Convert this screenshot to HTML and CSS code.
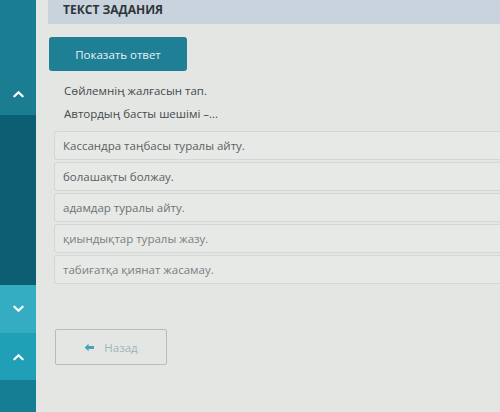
FILE: index.html
```html
<!DOCTYPE html>
<html lang="kk">
<head>
    <meta charset="UTF-8">
    <meta name="viewport" content="width=device-width, initial-scale=1.0">
    <title>Текст задания</title>
    <link rel="stylesheet" href="styles.css">
</head>
<body>
    <div class="layout">
        <div class="sidebar">
            <div class="side-block top">
                <svg class="chev" viewBox="0 0 12 8"><path d="M1.5 6.5 L6 2 L10.5 6.5"/></svg>
            </div>
            <div class="side-block dark"></div>
            <div class="side-block light">
                <svg class="chev" viewBox="0 0 12 8"><path d="M1.5 1.5 L6 6 L10.5 1.5"/></svg>
            </div>
            <div class="side-block mid">
                <svg class="chev" viewBox="0 0 12 8"><path d="M1.5 6.5 L6 2 L10.5 6.5"/></svg>
            </div>
            <div class="side-block bottom"></div>
        </div>

        <div class="main">
            <div class="task-header">ТЕКСТ ЗАДАНИЯ</div>
            <div class="content">
                <button class="btn-answer">Показать ответ</button>
                <div class="question">
                    <p>Сөйлемнің жалғасын тап.</p>
                    <p>Автордың басты шешімі –...</p>
                </div>
                <div class="options">
                    <div class="option">Кассандра таңбасы туралы айту.</div>
                    <div class="option">болашақты болжау.</div>
                    <div class="option">адамдар туралы айту.</div>
                    <div class="option">қиындықтар туралы жазу.</div>
                    <div class="option">табиғатқа қиянат жасамау.</div>
                </div>
                <button class="btn-back">
                    <svg class="arrow" viewBox="0 0 12 10"><path d="M0.5 5 L5 0.8 L5 3.3 L11 3.3 L11 6.7 L5 6.7 L5 9.2 Z"/></svg>
                    Назад
                </button>
            </div>
        </div>
    </div>
</body>
</html>
```

FILE: styles.css
```css
body {
    margin: 0;
    padding: 0;
    font-family: "Open Sans", Arial, sans-serif;
    background-color: #e2e5e1;
    overflow: hidden;
}

.layout {
    display: flex;
    height: 412px;
}

/* left navigation strip */
.sidebar {
    width: 36px;
    display: flex;
    flex-direction: column;
}

.side-block {
    display: flex;
    justify-content: center;
}

.side-block.top {
    height: 115px;
    background-color: #1b7d91;
    align-items: flex-end;
    padding-bottom: 17px;
    box-sizing: border-box;
}

.side-block.dark {
    height: 170px;
    background-color: #0c5f72;
}

.side-block.light {
    height: 48px;
    background-color: #34adc3;
    align-items: center;
}

.side-block.mid {
    height: 47px;
    background-color: #1fa0b7;
    align-items: center;
}

.side-block.bottom {
    flex: 1;
    background-color: #157e94;
}

.chev {
    width: 11px;
    height: 8px;
    fill: none;
    stroke: #ffffff;
    stroke-width: 2.4;
    stroke-linecap: round;
    stroke-linejoin: round;
}

.main {
    flex: 1;
    padding-left: 12px;
    background-color: #e3e6e2;
}

.task-header {
    height: 24px;
    background-color: #c8d3de;
    padding-left: 15px;
    font-size: 12px;
    font-weight: bold;
    color: #2f3438;
    line-height: 20px;
}

.content {
    padding-left: 1px;
}

.btn-answer {
    margin-top: 13px;
    width: 138px;
    height: 34px;
    background-color: #1f7f95;
    border: none;
    border-radius: 3px;
    color: #e8f2f4;
    font-family: "Open Sans", Arial, sans-serif;
    font-size: 11.5px;
    cursor: pointer;
}

.question {
    margin: 8px 0 6px 15px;
    font-size: 11.5px;
    color: #454a4e;
}

.question p {
    margin: 0;
    line-height: 23px;
}

.options {
    display: flex;
    flex-direction: column;
    gap: 2px;
    margin-left: 5px;
}

.option {
    height: 27px;
    line-height: 27px;
    padding-left: 8px;
    border: 1px solid #d3d8d6;
    border-right: none;
    border-radius: 3px 0 0 3px;
    background-color: #e6e9e5;
    font-size: 11.5px;
    color: #5a5f63;
}

.option:nth-child(n+3) {
    color: #6b7175;
}

.option:nth-child(n+4) {
    color: #7a8084;
}

.btn-back {
    margin: 45px 0 0 6px;
    width: 112px;
    height: 36px;
    display: flex;
    align-items: center;
    justify-content: center;
    gap: 9px;
    background: transparent;
    border: 1px solid #b4bcbd;
    border-radius: 2px;
    color: #9fb4b9;
    font-family: "Open Sans", Arial, sans-serif;
    font-size: 11.5px;
    cursor: pointer;
}

.arrow {
    width: 11px;
    height: 9px;
    fill: #4aa3b8;
}
```
